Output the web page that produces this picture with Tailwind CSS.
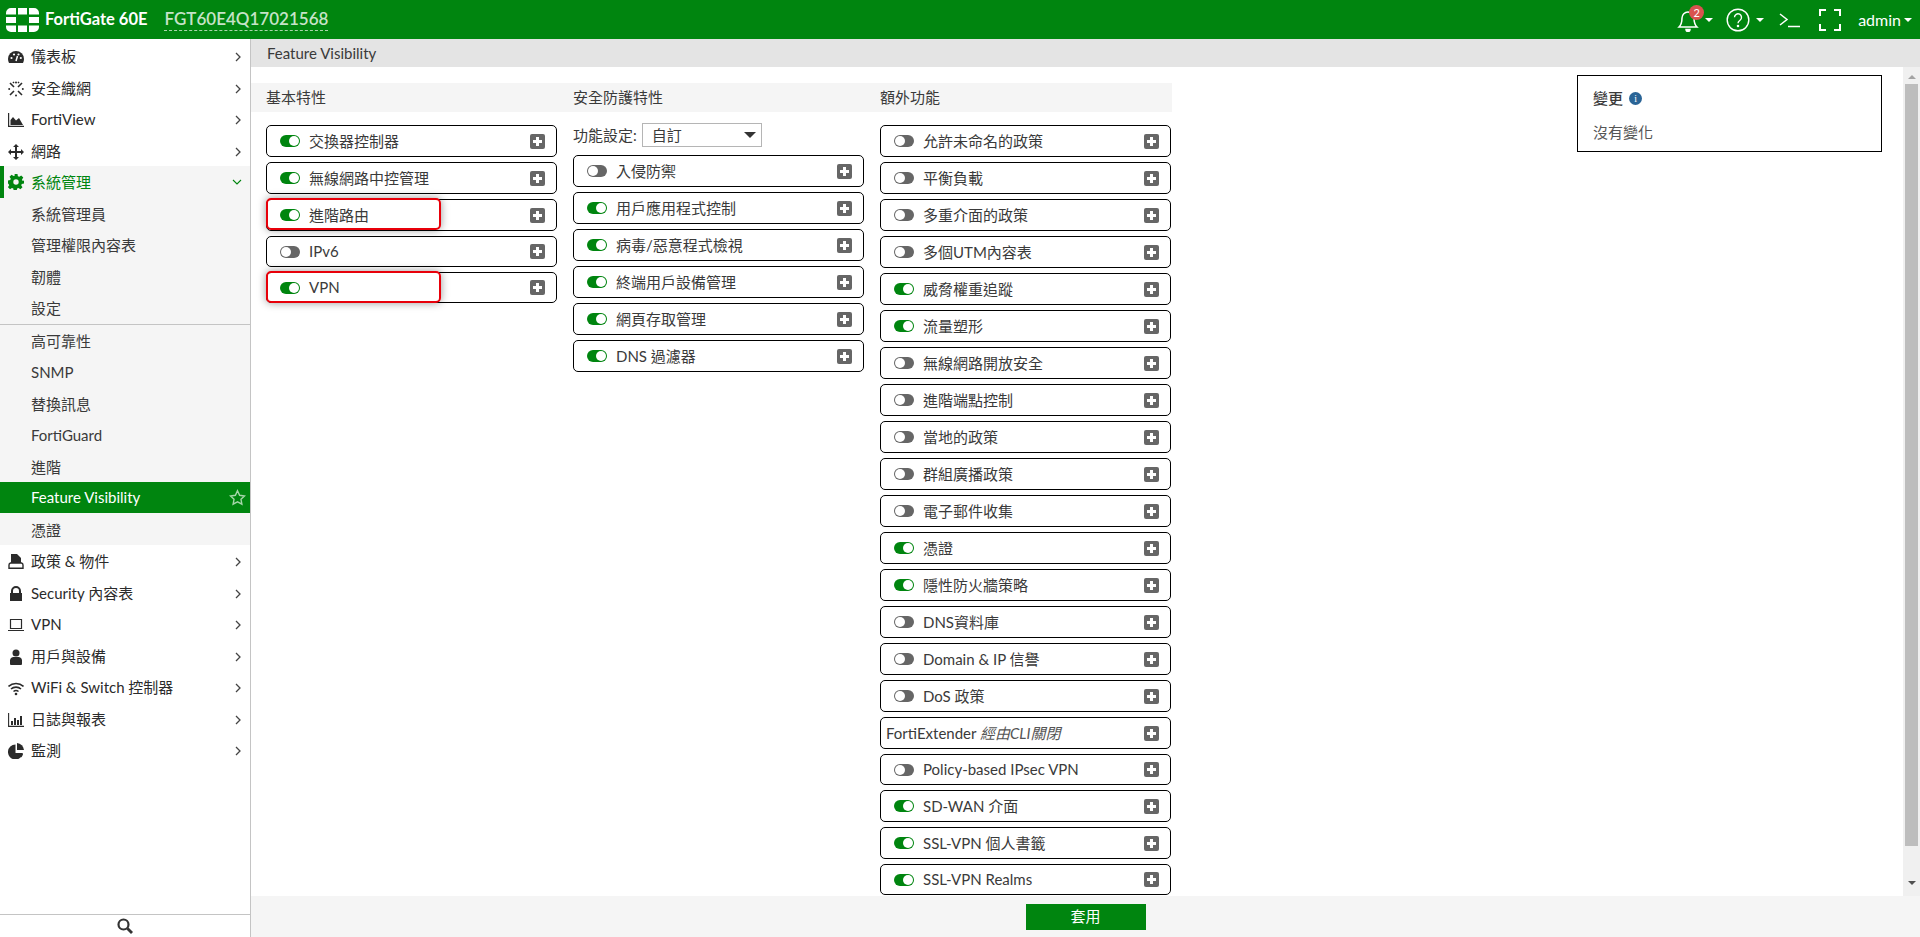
<!DOCTYPE html>
<html lang="zh-Hant">
<head>
    <meta charset="UTF-8">
    <title>FortiGate 60E - Feature Visibility</title>
    <script src="https://cdn.jsdelivr.net/npm/@tailwindcss/browser@4"></script>
</head>
<body class="h-screen overflow-hidden bg-white text-[15px] text-[#3a3a3a] font-['Lato','Noto_Sans_CJK_TC',sans-serif]">
<div class="flex flex-col h-[937px]">

    <!-- Top bar -->
    <header class="flex items-center h-[39px] shrink-0 bg-[#00850f] text-white">
        <svg class="ml-[6px] w-[33px] h-[24px]" viewBox="0 0 33 24" fill="#fff">
            <path d="M5 0h5v6.500H0V5a5 5 0 0 1 5-5zM12 0h9v6.500h-9zM23 0h5a5 5 0 0 1 5 5v1.500H23zM0 9h10v6H0zM23 9h10v6H23zM0 17.500h10V24H5a5 5 0 0 1-5-5zM12 17.500h9V24h-9zM23 17.500h10V19a5 5 0 0 1-5 5h-5z"/>
        </svg>
        <span class="ml-[6px] text-[16.500px] font-bold">FortiGate 60E</span>
        <span class="ml-[17px] text-[17px] leading-[22px] font-semibold text-[#c6e3c8] border-b border-dashed border-[#a9d6ac]">FGT60E4Q17021568</span>
        <div class="flex items-center ml-auto">
            <div class="relative w-[22px] h-[24px]">
                <svg class="w-[22px] h-[24px]" viewBox="0 0 22 24" fill="none" stroke="#fff" stroke-width="1.500"><path d="M2 19c2-2 3-4 3-9a6 6 0 0 1 12 0c0 5 1 7 3 9z"/><path d="M9 21.500a2 2 0 0 0 4 0z" fill="#fff"/></svg>
                <span class="absolute left-[12px] -top-[3px] w-[15px] h-[15px] rounded-full bg-[#d9534f] text-[11px] leading-[15px] text-center">2</span>
            </div>
            <span class="ml-[6px] w-0 h-0 border-x-[4px] border-x-transparent border-t-[4px] border-t-white"></span>
            <svg class="ml-[13px] w-[24px] h-[24px]" viewBox="0 0 24 24" fill="none" stroke="#fff" stroke-width="1.400"><circle cx="12" cy="12" r="10.800"/><path d="M8.500 9.300a3.500 3.500 0 1 1 5.500 2.900c-1.300.9-2 1.500-2 3"/><circle cx="12" cy="18" r=".6" fill="#fff"/></svg>
            <span class="ml-[6px] w-0 h-0 border-x-[4px] border-x-transparent border-t-[4px] border-t-white"></span>
            <svg class="ml-[15px] w-[22px] h-[16px]" viewBox="0 0 22 16" fill="none" stroke="#fff" stroke-width="1.500"><path d="M1 2l7 5.500-7 5.500M9 14.500h12"/></svg>
            <svg class="ml-[18px] w-[22px] h-[22px]" viewBox="0 0 22 22" fill="none" stroke="#fff" stroke-width="2"><path d="M1 7V1h6M15 1h6v6M21 15v6h-6M7 21H1v-6"/></svg>
            <span class="ml-[17px] text-[16px]">admin</span>
            <span class="ml-[3px] mr-[8px] w-0 h-0 border-x-[4px] border-x-transparent border-t-[4px] border-t-white"></span>
        </div>
    </header>

    <div class="flex flex-1 min-h-0">
        <!-- Sidebar -->
        <aside class="flex flex-col w-[251px] shrink-0 border-r border-[#c4c4c4]">
            <nav id="nav" class="flex-1 pt-[1px]"></nav>
            <div class="flex items-center justify-center h-[23px] border-t border-[#c4c4c4]">
                <svg class="w-[16px] h-[16px]" viewBox="0 0 16 16" fill="none" stroke="#333" stroke-width="2.200"><circle cx="6.500" cy="6.500" r="5"/><path d="M10.500 10.500l4.500 4.500" stroke-width="2.800"/></svg>
            </div>
        </aside>

        <!-- Main -->
        <main class="flex flex-col flex-1 min-w-0">
            <div class="h-[28px] shrink-0 pl-[16px] leading-[28px] bg-[#e4e4e4]">Feature Visibility</div>
            <div class="flex flex-1 min-h-0">
                <div class="flex flex-1 min-w-0 overflow-hidden">
                    <div class="w-[921px] shrink-0 mt-[16px]">
                        <div class="flex h-[29px] leading-[29px] bg-[#f5f5f5]">
                            <div class="w-[322px] pl-[15px]">基本特性</div>
                            <div class="w-[307px]">安全防護特性</div>
                            <div>額外功能</div>
                        </div>
                        <div class="flex pl-[15px] pt-[11px]">
                            <div id="col1" class="flex flex-col gap-[5px] w-[291px] mt-[2px]"></div>
                            <div class="ml-[16px] w-[291px]">
                                <div class="flex items-center h-[24px]">
                                    <span>功能設定:</span>
                                    <div class="flex items-center justify-between ml-[5px] w-[120px] h-[24px] pl-[9px] pr-[5px] border border-[#b5b5b5]">
                                        <span>自訂</span>
                                        <span class="w-0 h-0 border-x-[6px] border-x-transparent border-t-[6px] border-t-[#333]"></span>
                                    </div>
                                </div>
                                <div id="col2" class="flex flex-col gap-[5px] mt-[8px]"></div>
                            </div>
                            <div id="col3" class="flex flex-col gap-[5px] ml-[16px] w-[291px] mt-[2px]"></div>
                        </div>
                    </div>
                    <!-- Change summary -->
                    <div class="w-[305px] h-[77px] shrink-0 ml-[405px] mt-[8px] pl-[15px] pt-[11px] border border-black">
                        <div class="flex items-center gap-[6px] font-medium">變更
                            <span class="w-[13px] h-[13px] rounded-full bg-[#2a6496] text-white text-[10px] leading-[13px] text-center font-['Liberation_Serif',serif]">i</span>
                        </div>
                        <div class="mt-[11px] text-[#555]">沒有變化</div>
                    </div>
                </div>
                <!-- Scrollbar -->
                <div class="flex flex-col items-center w-[17px] shrink-0 ml-auto bg-[#f0f0f0]">
                    <span class="mt-[8px] w-0 h-0 border-x-[4px] border-x-transparent border-b-[4px] border-b-[#a3a3a3]"></span>
                    <div class="mt-[5px] w-[13px] h-[762px] bg-[#bdbdbd]"></div>
                    <span class="mt-[35px] w-0 h-0 border-x-[4px] border-x-transparent border-t-[4px] border-t-[#505050]"></span>
                </div>
            </div>
            <div class="flex justify-center items-center h-[41px] shrink-0 bg-[#f5f5f5]">
                <button class="w-[120px] h-[26px] bg-[#00850f] text-white">套用</button>
            </div>
        </main>
    </div>
</div>

<script>
    // Sidebar icons, one path set per menu entry
    const icons = {
        dash: '<path fill="currentColor" d="M8 2a8 8 0 0 0-8 8c0 1.500.4 2.700 1 4h14c.6-1.300 1-2.500 1-4a8 8 0 0 0-8-8z"/><circle cx="3.500" cy="9" r="1.100" fill="#fff"/><circle cx="6" cy="5.500" r="1.100" fill="#fff"/><circle cx="10.500" cy="5.500" r="1.100" fill="#fff"/><circle cx="12.800" cy="9" r="1.100" fill="#fff"/><path d="M8 12l1.500-5" stroke="#fff" stroke-width="1.500"/>',
        fabric: '<g fill="none" stroke="currentColor" stroke-width="1.600"><path d="M2 2l4 4M14 2l-4 4M2 14l4-4M14 14l-4-4M5 1l1 1M11 1l-1 1"/></g><g fill="currentColor"><circle cx="8" cy="1.500" r="1"/><circle cx="8" cy="14.500" r="1"/><circle cx="1.200" cy="8" r="1"/><circle cx="14.800" cy="8" r="1"/></g>',
        view: '<path fill="none" stroke="currentColor" stroke-width="1.200" d="M.6 1v13.400H16"/><path fill="currentColor" d="M2.500 13V8l2.500-3 3 3.500L11 6l4 7z"/>',
        net: '<path fill="currentColor" d="M8 0l3 3H9v4h4V5l3 3-3 3V9H9v4h2l-3 3-3-3h2V9H3v2L0 8l3-3v2h4V3H5z"/>',
        gear: '<path fill="currentColor" fill-rule="evenodd" d="M6.500 0h3l.4 2.200 1.400.6L13.200 1.500l2.100 2.100-1.300 1.900.6 1.400L16 6.500v3l-2.200.4-.6 1.400 1.300 1.900-2.100 2.100-1.900-1.300-1.400.6-.4 2.400h-3l-.4-2.400-1.400-.6-1.900 1.300-2.100-2.100 1.300-1.900-.6-1.400L0 9.500v-3l2.200-.4.600-1.400-1.300-1.900 2.100-2.100 1.900 1.300 1.400-.6zM8 5.300a2.700 2.700 0 1 0 0 5.400 2.700 2.700 0 0 0 0-5.400z"/>',
        policy: '<path fill="currentColor" d="M3 0h6l4 4v5H3z"/><path fill="none" stroke="currentColor" stroke-width="1.400" d="M1 11a2 2 0 0 1 1.500-2h11a2 2 0 0 1 1.500 2v3.300H1z"/>',
        lock: '<path fill="currentColor" fill-rule="evenodd" d="M3 7V5a5 5 0 0 1 10 0v2h1v8H2V7zm2 0h6V5a3 3 0 0 0-6 0z"/>',
        laptop: '<path fill="none" stroke="currentColor" stroke-width="1.200" d="M2.500 2.500h11v9h-11z"/><path fill="currentColor" d="M0 13h16v1H0z"/>',
        user: '<circle cx="8" cy="4" r="3.500" fill="currentColor"/><path fill="currentColor" d="M2 15v-4a3.500 3.500 0 0 1 3-3h6a3.500 3.500 0 0 1 3 3v4a1 1 0 0 1-1 1H3a1 1 0 0 1-1-1z"/>',
        wifi: '<g fill="none" stroke="currentColor" stroke-width="1.600"><path d="M.5 6.500a11 11 0 0 1 15 0M3 9a7.500 7.500 0 0 1 10 0M5.500 11.500a4 4 0 0 1 5 0"/></g><circle cx="8" cy="14" r="1.300" fill="currentColor"/>',
        log: '<path fill="none" stroke="currentColor" stroke-width="1.100" d="M.6 1v13.400H16"/><path fill="currentColor" d="M3 9h2v4H3zM6 6h2v7H6zM9 8h2v5H9zM12 4h2v9h-2z"/>',
        pie: '<path fill="currentColor" d="M7.500 1.500a7.500 7.500 0 1 0 7.400 8.500H7.500z"/><path fill="currentColor" d="M9 0a7.500 7.500 0 0 1 7 7H9z"/><path fill="currentColor" d="M9.500 11h5.500a7.500 7.500 0 0 1-2 3.500z"/>'
    };

    // [label, icon, kind]  kind: top, open, sub, subline, current
    const menu = [
        ['儀表板', 'dash', 'top'], ['安全織網', 'fabric', 'top'], ['FortiView', 'view', 'top'], ['網路', 'net', 'top'],
        ['系統管理', 'gear', 'open'],
        ['系統管理員', '', 'sub'], ['管理權限內容表', '', 'sub'], ['韌體', '', 'sub'], ['設定', '', 'subline'],
        ['高可靠性', '', 'sub'], ['SNMP', '', 'sub'], ['替換訊息', '', 'sub'], ['FortiGuard', '', 'sub'], ['進階', '', 'sub'],
        ['Feature Visibility', '', 'current'], ['憑證', '', 'sub'],
        ['政策 &amp; 物件', 'policy', 'top'], ['Security 內容表', 'lock', 'top'], ['VPN', 'laptop', 'top'], ['用戶與設備', 'user', 'top'],
        ['WiFi &amp; Switch 控制器', 'wifi', 'top'], ['日誌與報表', 'log', 'top'], ['監測', 'pie', 'top']
    ];

    const chevronRight = '<svg class="absolute left-[235px] top-[12px] w-[6px] h-[10px]" viewBox="0 0 6 10" fill="none" stroke="#444" stroke-width="1.300"><path d="M1 1l4 4-4 4"/></svg>';
    const chevronDown = '<svg class="absolute left-[228px] top-[13px] w-[10px] h-[6px]" viewBox="0 0 10 6" fill="none" stroke="#00850f" stroke-width="1.100"><path d="M1 1l4 4 4-4"/></svg>';
    const star = '<svg class="absolute left-[229px] top-[7px] w-[17px] h-[17px]" viewBox="0 0 24 24" fill="none" stroke="#a5d6a9" stroke-width="2"><path d="M12 2.500l3 6.400 7 .9-5.100 4.800 1.300 6.900-6.200-3.400-6.200 3.400 1.300-6.900L2 9.800l7-.9z"/></svg>';

    document.getElementById('nav').innerHTML = menu.map(([label, icon, kind]) => {
        const svg = icon ? `<svg class="absolute left-[8px] top-[9px] w-[16px] h-[16px]" viewBox="0 0 16 16">${icons[icon]}</svg>` : '';
        if (kind === 'top') return `<div class="relative h-[31.5px] pl-[31px] leading-[33px] bg-white text-[#2b2b2b]">${svg}<span>${label}</span>${chevronRight}</div>`;
        if (kind === 'open') return `<div class="relative h-[31.5px] pl-[31px] leading-[33px] bg-[#f5f5f5] text-[#00850f] border-l-[4px] border-[#00850f]"><div class="absolute -left-[4px] -top-[1px] text-[#00850f]">${svg}</div><span class="-ml-[4px]">${label}</span>${chevronDown}</div>`;
        if (kind === 'current') return `<div class="relative h-[31.5px] pl-[31px] leading-[31px] bg-[#00850f] text-white border-b border-[#f5f5f5]">${label}${star}</div>`;
        if (kind === 'subline') return `<div class="h-[32.5px] pl-[31px] leading-[33px] bg-[#f5f5f5] border-b border-[#c4c4c4]">${label}</div>`;
        return `<div class="h-[31.5px] pl-[31px] leading-[33px] bg-[#f5f5f5]">${label}</div>`;
    }).join('');

    // Feature cards: [label, on/off, flag]  flag h31 = latin-only row, one pixel shorter
    const plus = '<svg class="ml-auto mr-[11px] w-[15px] h-[15px] shrink-0" viewBox="0 0 15 15"><rect width="15" height="15" rx="2" fill="#666"/><path d="M6 3h3v3h3v3H9v3H6V9H3V6h3z" fill="#fff"/></svg>';
    const toggleOn = '<span class="relative w-[20px] h-[12px] shrink-0 rounded-full bg-[#00850f]"><span class="absolute right-[1px] top-[1px] w-[10px] h-[10px] rounded-full bg-white"></span></span>';
    const toggleOff = '<span class="relative w-[20px] h-[12px] shrink-0 rounded-full bg-[#666]"><span class="absolute left-[1px] top-[1px] w-[10px] h-[10px] rounded-full bg-white"></span></span>';
    const marker = '<span class="absolute -left-px -top-[2px] w-[175px] h-[32px] rounded-[5px] border-2 border-[#e8000a] shadow-[0_0_8px_rgba(0,0,0,0.4)]"></span>';

    function card([label, on, flag]) {
        const height = flag === 'h31' || flag === 'mark31' ? 'h-[31px]' : 'h-[32px]';
        const mark = flag === 'mark' || flag === 'mark31' ? marker : '';
        const toggle = on ? toggleOn : toggleOff;
        return `<div class="relative flex items-center ${height} pl-[13px] border border-black rounded-[5px]">${toggle}<span class="ml-[9px]">${label}</span>${plus}${mark}</div>`;
    }

    const col1 = [['交換器控制器', 1], ['無線網路中控管理', 1], ['進階路由', 1, 'mark'], ['IPv6', 0, 'h31'], ['VPN', 1, 'mark31']];
    const col2 = [['入侵防禦', 0], ['用戶應用程式控制', 1], ['病毒/惡意程式檢視', 1], ['終端用戶設備管理', 1], ['網頁存取管理', 1], ['DNS 過濾器', 1]];
    const col3 = [['允許未命名的政策', 0], ['平衡負載', 0], ['多重介面的政策', 0], ['多個UTM內容表', 0], ['威脅權重追蹤', 1], ['流量塑形', 1],
        ['無線網路開放安全', 0], ['進階端點控制', 0], ['當地的政策', 0], ['群組廣播政策', 0], ['電子郵件收集', 0], ['憑證', 1], ['隱性防火牆策略', 1],
        ['DNS資料庫', 0], ['Domain &amp; IP 信譽', 0], ['DoS 政策', 0], 'ext', ['Policy-based IPsec VPN', 0, 'h31'], ['SD-WAN 介面', 1], ['SSL-VPN 個人書籤', 1], ['SSL-VPN Realms', 1, 'h31']];

    document.getElementById('col1').innerHTML = col1.map(card).join('');
    document.getElementById('col2').innerHTML = col2.map(card).join('');
    document.getElementById('col3').innerHTML = col3.map(item => item === 'ext'
        ? `<div class="flex items-center h-[32px] pl-[5px] border border-black rounded-[5px]"><span>FortiExtender <i class="text-[#555]">經由CLI關閉</i></span>${plus}</div>`
        : card(item)).join('');
</script>
</body>
</html>
